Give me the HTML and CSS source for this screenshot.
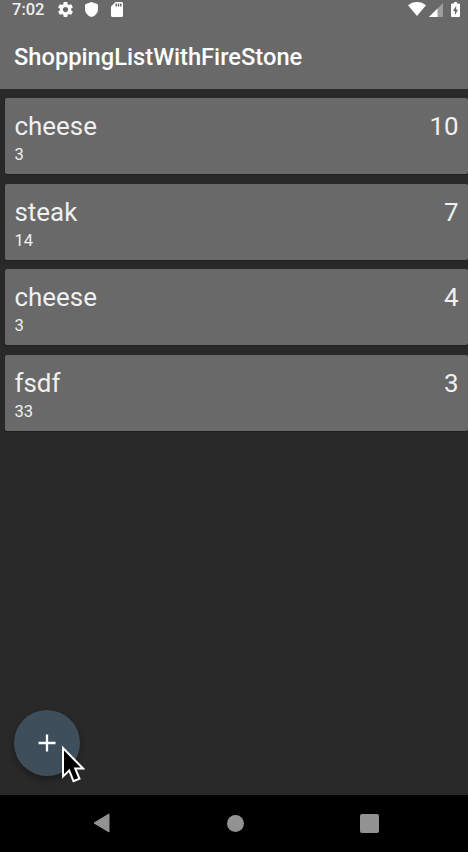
FILE: index.html
```html
<!DOCTYPE html>
<html lang="en">
<head>
<meta charset="utf-8">
<title>ShoppingListWithFireStone</title>
<link rel="stylesheet" href="styles.css">
</head>
<body>
<div class="screen">
  <header class="header">
    <div class="status">
      <span class="clock">7:02</span>
      <svg class="gear" viewBox="2 2 20 20"><path d="M19.43 12.98c.04-.32.07-.64.07-.98s-.03-.66-.07-.98l2.11-1.65c.19-.15.24-.42.12-.64l-2-3.46c-.12-.22-.39-.3-.61-.22l-2.49 1c-.52-.4-1.08-.73-1.69-.98l-.38-2.65C14.46 2.18 14.25 2 14 2h-4c-.25 0-.46.18-.49.42l-.38 2.65c-.61.25-1.17.59-1.69.98l-2.49-1c-.23-.09-.49 0-.61.22l-2 3.46c-.13.22-.07.49.12.64l2.11 1.65c-.04.32-.07.65-.07.98s.03.66.07.98l-2.11 1.65c-.19.15-.24.42-.12.64l2 3.46c.12.22.39.3.61.22l2.49-1c.52.4 1.08.73 1.69.98l.38 2.65c.03.24.24.42.49.42h4c.25 0 .46-.18.49-.42l.38-2.65c.61-.25 1.17-.59 1.69-.98l2.49 1c.23.09.49 0 .61-.22l2-3.46c.12-.22.07-.49-.12-.64l-2.11-1.65zM12 15.5c-1.93 0-3.500-1.570-3.500-3.500s1.570-3.500 3.500-3.500 3.500 1.570 3.500 3.500-1.570 3.500-3.500 3.500z"/></svg>
      <svg class="shield" viewBox="0 0 13 15"><path d="M6.500 0L12.200 2.100Q13 2.400 13 3.300V7c0 3.900-2.700 7-6.500 8C2.700 14 0 10.900 0 7V3.300Q0 2.400.8 2.100z"/></svg>
      <svg class="sd" viewBox="4 2 16 20" preserveAspectRatio="none"><path d="M18 2h-8L4 8v12c0 1.100.9 2 2 2h12c1.100 0 2-.9 2-2V4c0-1.100-.9-2-2-2zm-6 6h-2V4h2v4zm3 0h-2V4h2v4zm3 0h-2V4h2v4z"/></svg>
      <span class="spacer"></span>
      <svg class="wifi" viewBox="0 0 18 14"><path d="M0 3.300C2.500 1.200 5.600 0 9 0s6.500 1.200 9 3.300L9 14z"/></svg>
      <svg class="signal" viewBox="0 0 14 14"><path opacity=".35" d="M0 14L14 0v14z"/><path d="M0 14L8.500 5.500V14z"/></svg>
      <svg class="battery" viewBox="0 0 9 15"><path fill-rule="evenodd" d="M3 0h3v1.500h2q1 0 1 1V14q0 1-1 1H1q-1 0-1-1V2.500q0-1 1-1h2zM5.200 3.800L2 9h2v4l3-5.200H5.200z"/></svg>
    </div>
    <h1 class="title">ShoppingListWithFireStone</h1>
  </header>
  <main class="list">
    <div class="card"><div><div class="name">cheese</div><div class="sub">3</div></div><div class="count">10</div></div>
    <div class="card"><div><div class="name">steak</div><div class="sub">14</div></div><div class="count">7</div></div>
    <div class="card"><div><div class="name">cheese</div><div class="sub">3</div></div><div class="count">4</div></div>
    <div class="card"><div><div class="name">fsdf</div><div class="sub">33</div></div><div class="count">3</div></div>
  </main>
  <button class="fab" aria-label="Add"><svg viewBox="0 0 18 18"><path d="M9 .5v17M.5 9h17"/></svg></button>
  <svg class="cursor" viewBox="0 0 24 38"><path d="M2 3v28.500l6.200-6 4.300 10.700 6-2.400-4.300-10.300H22z"/></svg>
  <nav class="nav">
    <svg class="back" viewBox="0 0 17 20"><path d="M16 1v18L1 10z"/></svg>
    <span class="home"></span>
    <span class="recent"></span>
  </nav>
</div>
</body>
</html>
```
FILE: styles.css
```css
* { box-sizing: border-box; }
body { margin: 0; background: #292929; font-family: Roboto, sans-serif; }
svg { display: block; flex: none; fill: #fff; }
.screen { position: relative; width: 468px; height: 852px; display: flex; flex-direction: column; overflow: hidden; background: #292929; }
.header { height: 88.7px; flex: none; background: #696969; color: #fff; }
.status { height: 19px; display: flex; align-items: center; padding: 0 8px 0 12px; }
.clock { width: 46px; font-size: 16.500px; line-height: 19px; font-weight: 500; color: #f0f0f0; }
.gear { width: 15px; height: 15px; }
.shield { width: 13px; height: 15px; margin-left: 12px; }
.sd { width: 12px; height: 15px; margin-left: 13px; }
.spacer { flex: 1; }
.wifi { width: 18px; height: 14px; margin-top: -2px; }
.signal { width: 14px; height: 14px; margin-left: 3px; }
.battery { width: 9px; height: 15px; margin-left: 8px; }
.title { margin: 22px 0 0 14px; font-size: 23.700px; line-height: 32px; font-weight: 500; white-space: nowrap; }
.list { flex: 1; display: flex; flex-direction: column; gap: 9.3px; padding: 9.3px 0 0 5px; }
.card { height: 76.3px; flex: none; display: flex; justify-content: space-between; padding: 12px 9.500px 0 9.500px; background: #696969; border-radius: 2px; color: #f0f0f0; box-shadow: 0 1px 1px #202020; }
.name, .count { font-size: 25.900px; line-height: 32px; }
.sub { font-size: 16.500px; line-height: 26px; }
.fab { position: absolute; left: 14px; top: 710px; width: 66px; height: 66px; padding: 0; border: 0; border-radius: 50%; display: flex; align-items: center; justify-content: center; background: #3e4f5b; box-shadow: 0 4px 7px rgba(0, 0, 0, .3); }
.fab svg { width: 18px; height: 18px; fill: none; stroke: #fff; stroke-width: 2.300; }
.cursor { position: absolute; left: 61px; top: 745px; width: 24px; height: 38px; }
.cursor path { fill: #000; stroke: #fff; stroke-width: 2; }
.nav { height: 57px; flex: none; display: flex; align-items: center; padding: 0 89px 1px 93px; justify-content: space-between; background: #000; }
.back { width: 17px; height: 20px; }
.back path { fill: #929292; stroke: #929292; stroke-linejoin: round; }
.home { width: 17px; height: 17px; border-radius: 50%; background: #929292; }
.recent { width: 19px; height: 19px; border-radius: 2px; background: #929292; }
```
